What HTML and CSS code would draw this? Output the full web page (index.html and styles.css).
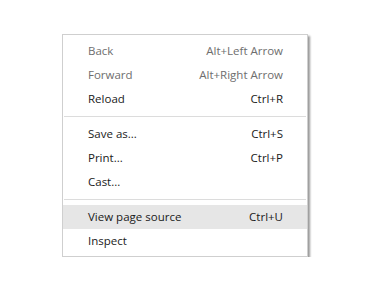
FILE: index.html
```html
<!DOCTYPE html>
<html>
<head>
<meta charset="utf-8">
<link rel="stylesheet" href="styles.css">
</head>
<body>
<div class="menu">
  <div class="item disabled"><span class="label">Back</span><span class="key">Alt+Left Arrow</span></div>
  <div class="item disabled"><span class="label">Forward</span><span class="key">Alt+Right Arrow</span></div>
  <div class="item"><span class="label">Reload</span><span class="key">Ctrl+R</span></div>
  <div class="sep"></div>
  <div class="item"><span class="label">Save as...</span><span class="key">Ctrl+S</span></div>
  <div class="item"><span class="label">Print...</span><span class="key">Ctrl+P</span></div>
  <div class="item"><span class="label">Cast...</span></div>
  <div class="sep"></div>
  <div class="item hover"><span class="label">View page source</span><span class="key">Ctrl+U</span></div>
  <div class="item"><span class="label">Inspect</span></div>
</div>
</body>
</html>
```

FILE: styles.css
```css
html, body {
  margin: 0;
  padding: 0;
  background: #ffffff;
}
body {
  padding: 34px 0 0 62px;
  font-family: "Open Sans", "Noto Sans", sans-serif;
  font-size: 11.5px;
}
.menu {
  width: 244px;
  border: 1px solid #cfcfcf;
  background: #ffffff;
  padding: 4px 0 3px 0;
  box-shadow: 2px 2px 2px rgba(0, 0, 0, 0.4);
  display: flex;
  flex-direction: column;
}
.item {
  height: 24px;
  display: flex;
  align-items: center;
  justify-content: space-between;
  padding: 0 24px 0 25px;
  color: #1a1a1a;
  line-height: 24px;
}
.item.disabled {
  color: #6e6e6e;
}
.item.hover {
  background: #e6e6e6;
}
.sep {
  height: 1px;
  background: #dcdcdc;
  margin: 5px 1px 5px 1px;
}
```
